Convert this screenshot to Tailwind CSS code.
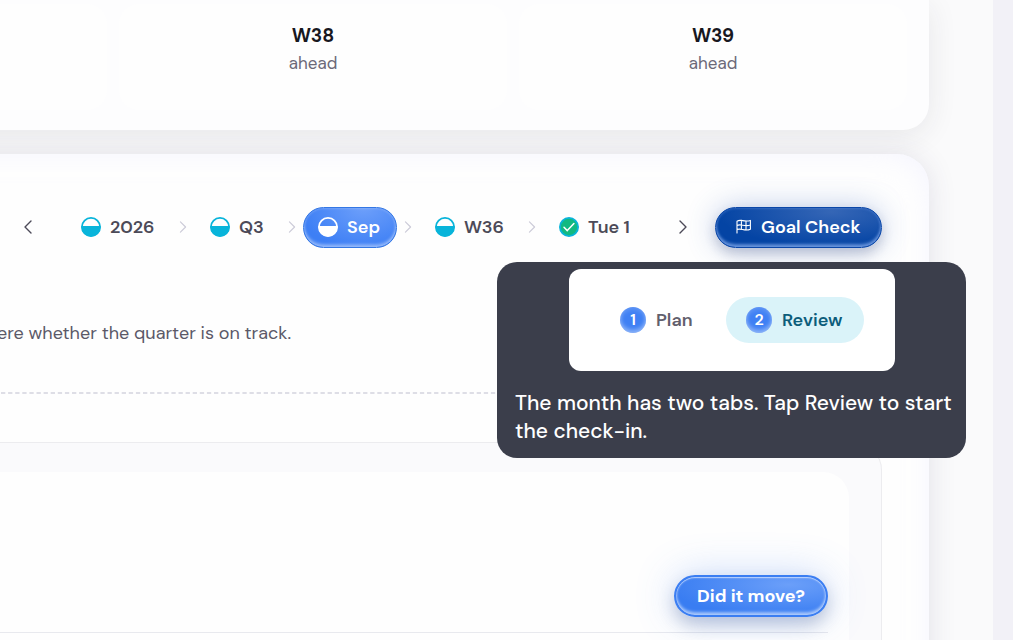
<!DOCTYPE html>
<html lang="en">
<head>
<meta charset="utf-8">
<meta name="viewport" content="width=device-width, initial-scale=1">
<title>Goal Check</title>
<script src="https://cdn.jsdelivr.net/npm/@tailwindcss/browser@4"></script>
</head>
<body class="h-screen overflow-hidden bg-white pr-[11px] font-['DM_Sans',Inter,sans-serif]">
<svg class="hidden" aria-hidden="true">
  <symbol id="half" viewBox="0 0 20 20"><circle cx="10" cy="10" r="9.1" fill="none" stroke="currentColor" stroke-width="1.8"/><path d="M.5 9h19v1a9.5 9.5 0 0 1-19 0z" fill="currentColor"/></symbol>
  <symbol id="next" viewBox="0 0 8 14"><path d="M1 1l6 6-6 6" fill="none" stroke="currentColor" stroke-width="1.4" stroke-linecap="round" stroke-linejoin="round"/></symbol>
</svg>
<div class="h-full overflow-hidden border-r-20 border-[#f2f1f7] bg-[#fafafb] pr-16">
  <section class="relative -ml-12 flex h-[130px] justify-end gap-3 rounded-br-[26px] bg-[#fdfdfe] pt-1 pr-[22px] pb-5 shadow-[0_6px_30px_rgba(40,40,60,0.09)]">
    <div class="min-w-0 flex-1 rounded-r-[20px] bg-[#fefefe]"></div>
    <div class="w-[388px] shrink-0 rounded-[20px] bg-[#fefefe] pt-[18px] text-center">
      <h3 class="text-[19px] leading-7 font-bold text-[#18181f]">W38</h3>
      <p class="text-[17px] leading-[26px] text-[#6b6978]">ahead</p>
    </div>
    <div class="w-[388px] shrink-0 rounded-[20px] bg-[#fefefe] pt-[18px] text-center">
      <h3 class="text-[19px] leading-7 font-bold text-[#18181f]">W39</h3>
      <p class="text-[17px] leading-[26px] text-[#6b6978]">ahead</p>
    </div>
  </section>

  <section class="relative mt-6 -ml-12 h-full rounded-tr-[32px] bg-[#fefefe] pt-[50px] pr-[47px] pl-12 shadow-[0_2px_28px_rgba(60,55,100,0.13),inset_-16px_16px_24px_-16px_rgba(240,240,255,0.5)]">
    <nav class="flex h-[46px] items-center text-lg font-semibold text-[#4c4a58]" aria-label="Period">
      <button class="ml-[5px] grid size-[46px] shrink-0 place-items-center rounded-full" aria-label="Previous"><svg class="h-3.5 w-2 rotate-180"><use href="#next"/></svg></button>
      <div class="ml-[14px] flex shrink-0 items-center gap-[7px] whitespace-nowrap">
        <button class="flex h-10 w-[107px] items-center gap-[9px] pl-4"><svg class="size-5 shrink-0 text-[#08b4da]"><use href="#half"/></svg>2026</button>
        <svg class="h-3 w-2 text-[#cccbd8]"><use href="#next"/></svg>
        <button class="flex h-10 w-[87px] items-center gap-[9px] pl-4"><svg class="size-5 shrink-0 text-[#08b4da]"><use href="#half"/></svg>Q3</button>
        <svg class="h-3 w-2 text-[#cccbd8]"><use href="#next"/></svg>
        <button class="flex h-[41px] w-[94px] items-center gap-[9px] rounded-full border border-[#3477e4] bg-[radial-gradient(ellipse_at_65%_0%,#6d9ffa,#3d7ff5_75%)] pl-[14px] text-white shadow-[inset_0_-3px_3px_rgba(255,255,255,0.35),inset_0_0_3px_rgba(255,255,255,0.35)]"><svg class="size-5 shrink-0"><use href="#half"/></svg>Sep</button>
        <svg class="h-3 w-2 text-[#cccbd8]"><use href="#next"/></svg>
        <button class="flex h-10 w-[102px] items-center gap-[9px] pl-4"><svg class="size-5 shrink-0 text-[#08b4da]"><use href="#half"/></svg>W36</button>
        <svg class="h-3 w-2 text-[#cccbd8]"><use href="#next"/></svg>
        <button class="flex h-10 w-[105px] items-center gap-[9px] pl-4"><svg class="size-5 shrink-0" viewBox="0 0 20 20"><circle cx="10" cy="10" r="9.1" fill="#12b981" stroke="#08b4da" stroke-width="1.8"/><path d="M5 10.3l3.3 3.3 6.6-7" fill="none" stroke="#fff" stroke-width="1.5" stroke-linecap="round" stroke-linejoin="round"/></svg>Tue 1</button>
      </div>
      <button class="ml-3 grid size-[46px] shrink-0 place-items-center rounded-full" aria-label="Next"><svg class="h-3.5 w-2"><use href="#next"/></svg></button>
      <button class="ml-auto flex h-[41px] w-[167px] shrink-0 items-center gap-[9px] rounded-full border border-[#0b47a8] bg-[radial-gradient(ellipse_at_70%_10%,#3566b6,#0444a4_70%)] pl-5 font-semibold whitespace-nowrap text-white shadow-[0_0_30px_rgba(55,100,190,0.32),0_6px_12px_rgba(30,40,80,0.2),inset_0_-3px_3px_rgba(150,185,245,0.6),inset_0_0_3px_rgba(110,155,235,0.6)]">
        <svg class="size-4 shrink-0" viewBox="0 0 16 16" fill="none" stroke="currentColor" stroke-width="1.1" stroke-linecap="round" stroke-linejoin="round"><path d="M1 14V2.2C4.8-.2 8 3.4 14.4 1.4v8.8C8.6 13 5 8.6 1 10.6M1 6.4c4.2-2 7.6 2 13.4-.5M5.4 1.2v8.4M10 2.2v8.9"/></svg>
        Goal Check
      </button>
    </nav>

    <p class="mt-[69px] -ml-[3px] text-lg leading-7 whitespace-nowrap text-[#5b5968]">ere whether the quarter is on track.</p>
    <svg class="mt-[45px] block h-0.5 w-full" aria-hidden="true"><path d="M1 1H2000" stroke="#dedee6" stroke-width="2" stroke-dasharray="4.3 2.8"/></svg>

    <div class="mt-12 -ml-12 h-full rounded-tr-[28px] border-t border-r border-[#ececef] bg-[#fafafc] pt-[29px] pr-8">
      <div class="h-full rounded-tr-[26px] bg-[#fefefe] pt-[103px] pr-[21px]">
        <div class="flex justify-end border-b border-[#e8e9ee] pb-[15px]">
          <button class="h-[42px] w-[154px] rounded-full border-2 border-[#3b7ef2] bg-[radial-gradient(ellipse_at_75%_20%,#6b9ff9,#397df2_75%)] text-lg leading-none font-bold whitespace-nowrap text-white shadow-[0_0_40px_rgba(80,135,245,0.3),0_8px_16px_rgba(45,65,110,0.25),inset_0_1px_1px_rgba(200,220,255,0.8),inset_0_-3px_3px_rgba(215,230,255,0.6),inset_0_0_3px_rgba(200,220,255,0.8)]">Did it move?</button>
        </div>
      </div>
    </div>

    <aside class="absolute top-[108px] right-[-37px] flex h-[196px] w-[469px] flex-col rounded-[20px] bg-[#393c49]/99 px-[18px] pt-[7px] text-white" role="tooltip">
      <div class="ml-[54px] flex h-[102px] w-[326px] items-center rounded-xl bg-white pl-[51px] text-lg font-semibold text-[#625f6d]">
        <button class="flex items-center gap-[10px]"><span class="grid size-[26px] place-items-center rounded-full bg-[#3f80f4] text-base font-semibold text-white shadow-[inset_0_-3px_4px_rgba(255,255,255,0.4),inset_0_3px_4px_rgba(255,255,255,0.15)]">1</span>Plan</button>
        <button class="mr-[31px] ml-auto flex h-[46px] w-[138px] items-center gap-[10px] rounded-full bg-[#daf3f9] pl-5 text-[#0c5d7b]"><span class="grid size-[26px] shrink-0 place-items-center rounded-full bg-[#3f80f4] text-base font-semibold text-white shadow-[inset_0_-3px_4px_rgba(255,255,255,0.4),inset_0_3px_4px_rgba(255,255,255,0.15)]">2</span>Review</button>
      </div>
      <p class="mt-[18px] text-[21px] leading-7 font-medium whitespace-nowrap">The month has two tabs. Tap Review to start<br>the check-in.</p>
    </aside>
  </section>
</div>
</body>
</html>
